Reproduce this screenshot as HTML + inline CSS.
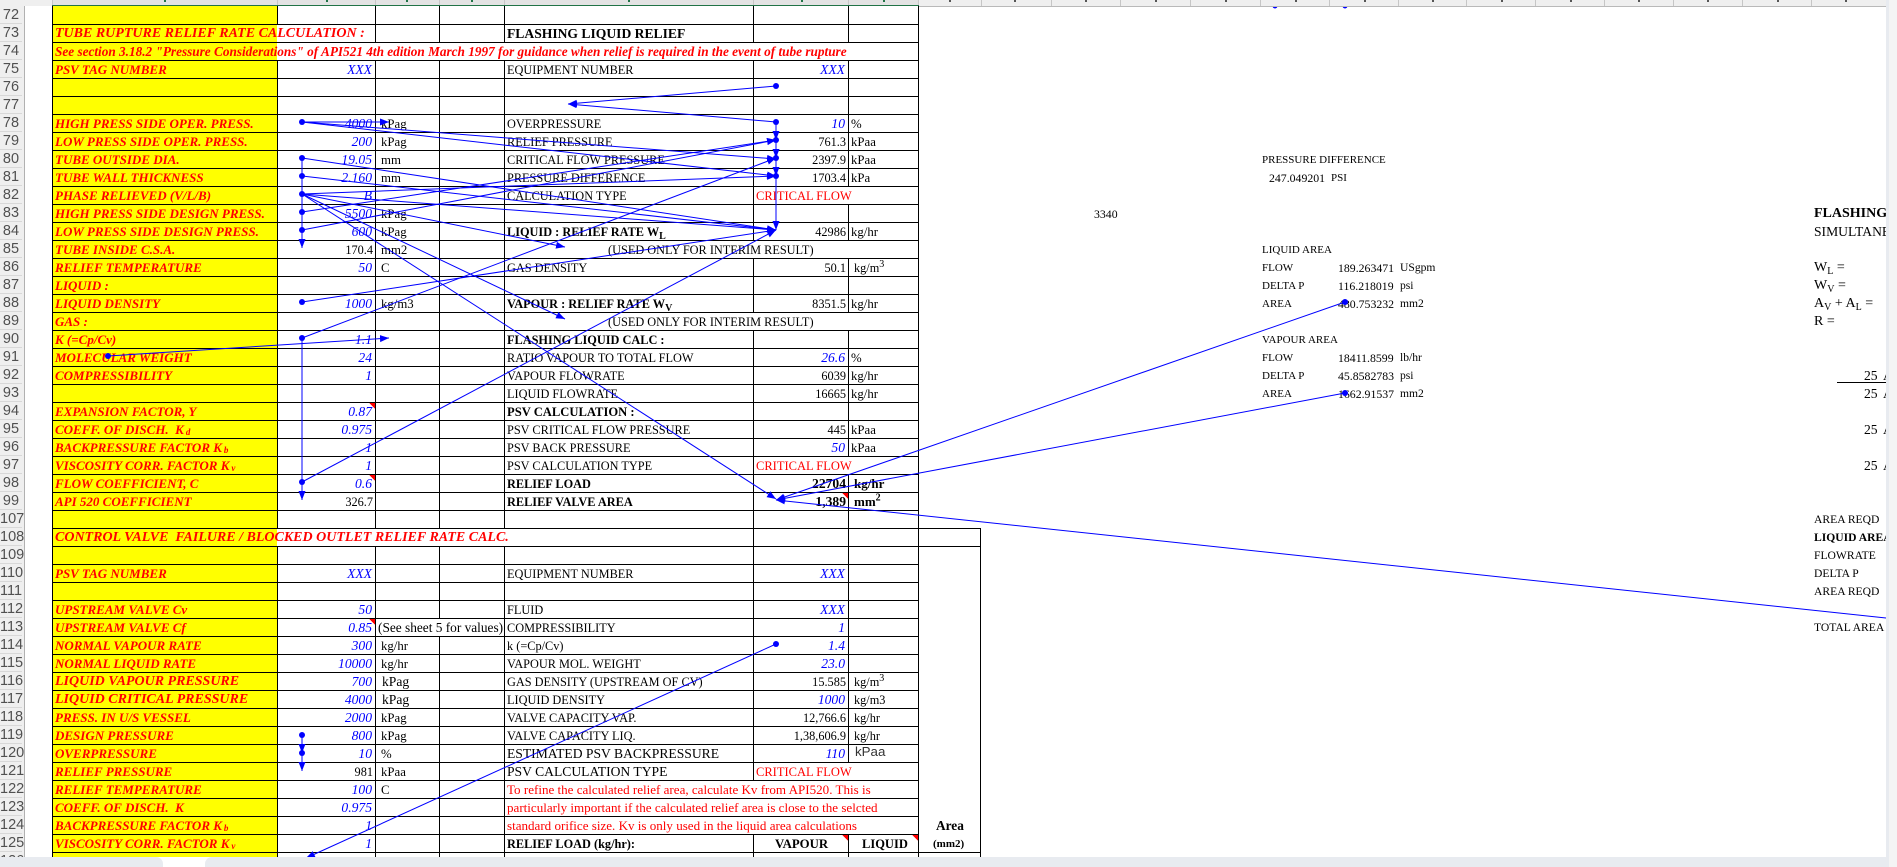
<!DOCTYPE html>
<html><head><meta charset="utf-8"><title>Sheet</title>
<style>
html,body{margin:0;padding:0;background:#fff}
#p{position:relative;width:1897px;height:867px;overflow:hidden;background:#fff;font-family:"Liberation Serif",serif;font-size:12.3px;color:#000}
#y{position:absolute;left:53px;top:6px;width:224px;height:851px;background:#ff0}
#g,#a{position:absolute;left:0;top:0}
.r{position:absolute;left:0;width:1897px;height:18px;line-height:18px}
.r span{position:absolute;top:1px;white-space:nowrap}
.r span sub,.r span sup{line-height:0;font-size:10px}
.r span sub{vertical-align:-3px}
.l{left:55px;color:#f00;font-weight:bold;font-style:italic;font-size:13px}
.l sub{font-size:9px!important;margin-left:2px;vertical-align:-1px!important}
.l.big{font-size:14px}
.v{right:1525px;color:#00f;font-style:italic;font-size:13.6px}
.n{right:1524px}
.u{left:381px;font-size:12.8px}
.m{left:507px}
.m.big{font-size:13.6px}
.m.b{font-size:12.3px}
.w{right:1052px;color:#00f;font-style:italic;font-size:13.6px}
.k{right:1051px}
.k.b{font-size:13.6px}
.x{left:851px;font-size:12.8px}
.c{left:756px;color:#f00;font-size:12.5px}
.b{font-weight:bold}
.t{left:608px}
.q{left:1262px;font-size:11px}.s{left:1338px;font-size:11.8px}.o{left:1400px;font-size:11.6px}
.f{left:1814px;font-size:11.6px}
.f.big{font-size:14px}
.e{left:507px;color:#f00;font-size:13.05px}
.tf{left:1864px;font-size:13.6px}
.ta{left:1883px;font-size:13.6px}
#rh{position:absolute;left:0;top:6px;width:25px;height:851px;background:#efefef;border-right:1px solid #b1b1b1;box-sizing:border-box;overflow:hidden;font-family:"Liberation Sans",sans-serif;font-size:14.5px;color:#505050}
#rh div{height:17px;line-height:18px;border-bottom:1px solid #d8d8d8;text-align:center;width:22px;margin-right:2px}
#ch{position:absolute;left:0;top:0;width:1886px;height:6px;background:#efefef;border-bottom:0}
#ch i{position:absolute;top:0;width:1px;height:6px;background:#c6c6c6}
#ch b{position:absolute;top:0;width:2px;height:2px;background:#555}
#sel{position:absolute;left:53px;top:0;width:865px;height:5px;background:#e3e3e3}
#gl{position:absolute;left:52px;top:5px;width:867px;height:1px;background:#217346}
#gy{position:absolute;left:919px;top:6px;width:967px;height:1px;background:#b9b9b9}
#rs{position:absolute;left:1886px;top:0;width:11px;height:867px;background:#f4f4f4;border-left:3px solid #e8ebf0;box-sizing:border-box}
.bb{position:absolute;top:857px;height:10px;background:#e8ebf0}
</style></head><body>
<div id="p">
<div id="y"></div>
<svg id="g" width="1897" height="867" shape-rendering="crispEdges">
<path fill="none" stroke="#000" stroke-width="1" d="
M52.5 6V857
M277.5 6V24M277.5 60V528M277.5 546V857
M375.5 6V42M375.5 60V528M375.5 546V857
M439.5 6V42M439.5 60V528M439.5 546V618M439.5 636V857
M504.5 6V42M504.5 60V528M504.5 546V857
M753.5 6V42M753.5 60V240M753.5 258V312M753.5 330V780M753.5 834V857
M848.5 6V42M848.5 60V186M848.5 204V240M848.5 258V312M848.5 330V456M848.5 474V762M848.5 834V857
M918.5 6V857
M980.5 528V857
M52 24.5H919M52 42.5H919M52 60.5H919M52 78.5H919M52 96.5H919M52 114.5H919M52 132.5H919M52 150.5H919M52 168.5H919M52 186.5H919M52 204.5H919M52 222.5H919M52 240.5H919M52 258.5H919M52 276.5H919M52 294.5H919M52 312.5H919M52 330.5H919M52 348.5H919M52 366.5H919M52 384.5H919M52 402.5H919M52 420.5H919M52 438.5H919M52 456.5H919M52 474.5H919M52 492.5H919M52 510.5H919
M52 528.5H981M52 546.5H981
M52 564.5H919M52 582.5H919M52 600.5H919M52 618.5H919M52 636.5H919M52 654.5H919M52 672.5H919M52 690.5H919M52 708.5H919M52 726.5H919M52 744.5H919M52 762.5H919M52 780.5H919M52 798.5H919M52 816.5H919M52 834.5H919
M52 852.5H981
M1837 382.5H1886"/>
<path fill="#f00" d="M369 403H375V409ZM369 475H375V481ZM842 493H848V499ZM369 619H375V625ZM842 835H848V841ZM912 835H918V841Z"/>
</svg>

<div class="r" style="top:24px"><span class="l big">TUBE RUPTURE RELIEF RATE CALCULATION :</span><span class="m b" style="font-size:13.6px">FLASHING LIQUID RELIEF</span></div>
<div class="r" style="top:42px"><span class="l" style="font-size:13.25px">See section 3.18.2 "Pressure Considerations" of API521 4th edition March 1997 for guidance when relief is required in the event of tube rupture</span></div>
<div class="r" style="top:60px"><span class="l">PSV TAG NUMBER</span><span class="v">XXX</span><span class="m">EQUIPMENT NUMBER</span><span class="w">XXX</span></div>
<div class="r" style="top:114px"><span class="l">HIGH PRESS SIDE OPER. PRESS.</span><span class="v">4000</span><span class="u">kPag</span><span class="m">OVERPRESSURE</span><span class="w">10</span><span class="x">%</span></div>
<div class="r" style="top:132px"><span class="l">LOW PRESS SIDE OPER. PRESS.</span><span class="v">200</span><span class="u">kPag</span><span class="m">RELIEF PRESSURE</span><span class="k">761.3</span><span class="x">kPaa</span></div>
<div class="r" style="top:150px"><span class="l">TUBE OUTSIDE DIA.</span><span class="v">19.05</span><span class="u">mm</span><span class="m">CRITICAL FLOW PRESSURE</span><span class="k">2397.9</span><span class="x">kPaa</span><span class="q">PRESSURE DIFFERENCE</span></div>
<div class="r" style="top:168px"><span class="l">TUBE WALL THICKNESS</span><span class="v">2.160</span><span class="u">mm</span><span class="m">PRESSURE DIFFERENCE</span><span class="k">1703.4</span><span class="x">kPa</span><span style="left:1269px;font-size:11.8px">247.049201</span><span style="left:1331px;font-size:11px">PSI</span></div>
<div class="r" style="top:186px"><span class="l">PHASE RELIEVED (V/L/B)</span><span class="v">B</span><span class="m">CALCULATION TYPE</span><span class="c">CRITICAL FLOW</span></div>
<div class="r" style="top:204px"><span class="l">HIGH PRESS SIDE DESIGN PRESS.</span><span class="v">5500</span><span class="u">kPag</span><span style="left:1094px;font-size:11.8px">3340</span><span class="f b big">FLASHING LIQUID</span></div>
<div class="r" style="top:222px"><span class="l">LOW PRESS SIDE DESIGN PRESS.</span><span class="v">600</span><span class="u">kPag</span><span class="m b">LIQUID : RELIEF RATE W<sub>L</sub></span><span class="k">42986</span><span class="x">kg/hr</span><span class="f big" style="font-size:13.6px">SIMULTANEOUS</span></div>
<div class="r" style="top:240px"><span class="l">TUBE INSIDE C.S.A.</span><span class="n">170.4</span><span class="u">mm2</span><span class="t">(USED ONLY FOR INTERIM RESULT)</span><span class="q">LIQUID AREA</span></div>
<div class="r" style="top:258px"><span class="l">RELIEF TEMPERATURE</span><span class="v">50</span><span class="u">C</span><span class="m">GAS DENSITY</span><span class="k">50.1</span><span style="left:854px">kg/m<sup>3</sup></span><span class="q">FLOW</span><span class="s">189.263471</span><span class="o">USgpm</span><span class="f big">W<sub>L</sub> =</span></div>
<div class="r" style="top:276px"><span class="l">LIQUID :</span><span class="q">DELTA P</span><span class="s">116.218019</span><span class="o">psi</span><span class="f big">W<sub>V</sub> =</span></div>
<div class="r" style="top:294px"><span class="l">LIQUID DENSITY</span><span class="v">1000</span><span class="u">kg/m3</span><span class="m b">VAPOUR : RELIEF RATE W<sub>V</sub></span><span class="k">8351.5</span><span class="x">kg/hr</span><span class="q">AREA</span><span class="s">480.753232</span><span class="o">mm2</span><span class="f big">A<sub>V</sub> + A<sub>L</sub> =</span></div>
<div class="r" style="top:312px"><span class="l">GAS :</span><span class="t">(USED ONLY FOR INTERIM RESULT)</span><span class="f big">R =</span></div>
<div class="r" style="top:330px"><span class="l">K (=Cp/Cv)</span><span class="v">1.1</span><span class="m b">FLASHING LIQUID CALC :</span><span class="q">VAPOUR AREA</span></div>
<div class="r" style="top:348px"><span class="l">MOLECULAR WEIGHT</span><span class="v">24</span><span class="m">RATIO VAPOUR TO TOTAL FLOW</span><span class="w">26.6</span><span class="x">%</span><span class="q">FLOW</span><span class="s">18411.8599</span><span class="o">lb/hr</span></div>
<div class="r" style="top:366px"><span class="l">COMPRESSIBILITY</span><span class="v">1</span><span class="m">VAPOUR FLOWRATE</span><span class="k">6039</span><span class="x">kg/hr</span><span class="q">DELTA P</span><span class="s">45.8582783</span><span class="o">psi</span><span class="tf">25</span><span class="ta">A</span></div>
<div class="r" style="top:384px"><span class="m">LIQUID FLOWRATE</span><span class="k">16665</span><span class="x">kg/hr</span><span class="q">AREA</span><span class="s">1662.91537</span><span class="o">mm2</span><span class="tf">25</span><span class="ta">A</span></div>
<div class="r" style="top:402px"><span class="l">EXPANSION FACTOR, Y</span><span class="v">0.87</span><span class="m b" style="font-size:12.6px">PSV CALCULATION :</span></div>
<div class="r" style="top:420px"><span class="l">COEFF. OF DISCH.&nbsp; K<sub>d</sub></span><span class="v">0.975</span><span class="m">PSV CRITICAL FLOW PRESSURE</span><span class="k">445</span><span class="x">kPaa</span><span class="tf">25</span><span class="ta">A</span></div>
<div class="r" style="top:438px"><span class="l">BACKPRESSURE FACTOR K<sub>b</sub></span><span class="v">1</span><span class="m">PSV BACK PRESSURE</span><span class="w">50</span><span class="x">kPaa</span></div>
<div class="r" style="top:456px"><span class="l">VISCOSITY CORR. FACTOR K<sub>v</sub></span><span class="v">1</span><span class="m">PSV CALCULATION TYPE</span><span class="c">CRITICAL FLOW</span><span class="tf">25</span><span class="ta">A</span></div>
<div class="r" style="top:474px"><span class="l">FLOW COEFFICIENT, C</span><span class="v">0.6</span><span class="m b">RELIEF LOAD</span><span class="k b">22704</span><span class="b" style="left:854px;font-size:13px">kg/hr</span></div>
<div class="r" style="top:492px"><span class="l">API 520 COEFFICIENT</span><span class="n">326.7</span><span class="m b">RELIEF VALVE AREA</span><span class="k b">1,389</span><span class="b" style="left:854px;font-size:13px">mm<sup>2</sup></span></div>
<div class="r" style="top:510px"><span class="f">AREA REQD</span></div>
<div class="r" style="top:528px"><span class="l big">CONTROL VALVE&nbsp; FAILURE / BLOCKED OUTLET RELIEF RATE CALC.</span><span class="f b">LIQUID AREA</span></div>
<div class="r" style="top:546px"><span class="f">FLOWRATE</span></div>
<div class="r" style="top:564px"><span class="l">PSV TAG NUMBER</span><span class="v">XXX</span><span class="m">EQUIPMENT NUMBER</span><span class="w">XXX</span><span class="f">DELTA P</span></div>
<div class="r" style="top:582px"><span class="f">AREA REQD</span></div>
<div class="r" style="top:600px"><span class="l">UPSTREAM VALVE Cv</span><span class="v">50</span><span class="m">FLUID</span><span class="w">XXX</span></div>
<div class="r" style="top:618px"><span class="l">UPSTREAM VALVE Cf</span><span class="v">0.85</span><span style="left:378px;font-size:13.33px">(See sheet 5 for values)</span><span class="m">COMPRESSIBILITY</span><span class="w">1</span><span class="f">TOTAL AREA</span></div>
<div class="r" style="top:636px"><span class="l">NORMAL VAPOUR RATE</span><span class="v">300</span><span class="u">kg/hr</span><span class="m">k (=Cp/Cv)</span><span class="w">1.4</span></div>
<div class="r" style="top:654px"><span class="l">NORMAL LIQUID RATE</span><span class="v">10000</span><span class="u">kg/hr</span><span class="m">VAPOUR MOL. WEIGHT</span><span class="w">23.0</span></div>
<div class="r" style="top:672px"><span class="l big">LIQUID VAPOUR PRESSURE</span><span class="v">700</span><span style="left:382px;font-size:13.6px">kPag</span><span class="m">GAS DENSITY (UPSTREAM OF CV)</span><span class="k">15.585</span><span style="left:854px">kg/m<sup>3</sup></span></div>
<div class="r" style="top:690px"><span class="l big">LIQUID CRITICAL PRESSURE</span><span class="v">4000</span><span style="left:382px;font-size:13.6px">kPag</span><span class="m">LIQUID DENSITY</span><span class="w">1000</span><span style="left:854px">kg/m3</span></div>
<div class="r" style="top:708px"><span class="l">PRESS. IN U/S VESSEL</span><span class="v">2000</span><span class="u">kPag</span><span class="m">VALVE CAPACITY VAP.</span><span class="k">12,766.6</span><span style="left:854px">kg/hr</span></div>
<div class="r" style="top:726px"><span class="l">DESIGN PRESSURE</span><span class="v">800</span><span class="u">kPag</span><span class="m">VALVE CAPACITY LIQ.</span><span class="k">1,38,606.9</span><span style="left:854px">kg/hr</span></div>
<div class="r" style="top:744px"><span class="l">OVERPRESSURE</span><span class="v">10</span><span class="u">%</span><span class="m big">ESTIMATED PSV BACKPRESSURE</span><span class="w">110</span><span style="left:855px;top:-1px;font-family:'Liberation Sans',sans-serif;font-size:13.33px;color:#333">kPaa</span></div>
<div class="r" style="top:762px"><span class="l">RELIEF PRESSURE</span><span class="n">981</span><span class="u">kPaa</span><span class="m big">PSV CALCULATION TYPE</span><span class="c">CRITICAL FLOW</span></div>
<div class="r" style="top:780px"><span class="l">RELIEF TEMPERATURE</span><span class="v">100</span><span class="u">C</span><span class="e">To refine the calculated relief area, calculate Kv from API520. This is</span></div>
<div class="r" style="top:798px"><span class="l">COEFF. OF DISCH.&nbsp; K</span><span class="v">0.975</span><span class="e">particularly important if the calculated relief area is close to the selcted</span></div>
<div class="r" style="top:816px"><span class="l">BACKPRESSURE FACTOR K<sub>b</sub></span><span class="v">1</span><span class="e">standard orifice size. Kv is only used in the liquid area calculations</span><span class="b" style="left:936px;font-size:13.33px">Area</span></div>
<div class="r" style="top:834px"><span class="l">VISCOSITY CORR. FACTOR K<sub>v</sub></span><span class="v">1</span><span class="m b">RELIEF LOAD (kg/hr):</span><span class="b" style="left:775px;font-size:12.8px">VAPOUR</span><span class="b" style="left:862px;font-size:12.5px">LIQUID</span><span class="b" style="left:933px;font-size:11px">(mm2)</span></div>

<svg id="a" width="1897" height="867" fill="none" stroke="#0000ff" stroke-width="1">
<defs><marker id="h" markerUnits="userSpaceOnUse" markerWidth="10" markerHeight="8" refX="9" refY="3.5" orient="auto"><path d="M0 0L9 3.5L0 7Z" fill="#0000ff" stroke="none"/></marker></defs>
<g marker-end="url(#h)">
<path d="M776 86L568 104"/><path d="M776 122L568 104"/>
<path d="M776 122V140"/><path d="M776 140V158"/><path d="M776 158V176"/><path d="M776 176V230"/>
<path d="M302 122H389"/><path d="M302 122L776 159"/><path d="M302 122L776 176"/>
<path d="M302 158L776 230"/><path d="M302 176L776 230"/><path d="M302 194L776 230"/>
<path d="M302 302L776 230"/><path d="M302 482L776 230"/>
<path d="M302 212L776 140"/><path d="M302 230L776 140"/><path d="M302 194L776 176"/><path d="M302 338L776 158"/>
<path d="M302 194L565 247"/><path d="M302 194L565 319"/><path d="M302 194L776 499"/>
<path d="M302 158V248"/><path d="M302 338V500"/>
<path d="M108 356L389 338"/>
<path d="M1345 302L776 500"/><path d="M1345 393L776 500"/><path d="M1886 618L776 500"/>
<path d="M776 644L306 858"/>
<path d="M302 735V753"/><path d="M302 753V771"/>
</g>
<g fill="#0000ff" stroke="none">
<circle cx="776" cy="86" r="3"/><circle cx="776" cy="122" r="3"/><circle cx="776" cy="140" r="3"/><circle cx="776" cy="158" r="3"/><circle cx="776" cy="176" r="3"/>
<circle cx="302" cy="122" r="3"/><circle cx="302" cy="158" r="3"/><circle cx="302" cy="176" r="3"/><circle cx="302" cy="194" r="3"/><circle cx="302" cy="212" r="3"/><circle cx="302" cy="230" r="3"/>
<circle cx="302" cy="302" r="3"/><circle cx="302" cy="338" r="3"/><circle cx="302" cy="482" r="3"/><circle cx="108" cy="356" r="3"/>
<circle cx="1345" cy="302" r="3"/><circle cx="1345" cy="393" r="3"/><circle cx="776" cy="644" r="3"/>
<circle cx="302" cy="735" r="3"/><circle cx="302" cy="753" r="3"/>
<circle cx="1275" cy="6" r="2.5"/><circle cx="1345" cy="6" r="2.5"/>
</g>
</svg>

<div id="ch">
<div id="sel"></div>
<i style="left:52px"></i><i style="left:277px"></i><i style="left:375px"></i><i style="left:439px"></i><i style="left:504px"></i><i style="left:753px"></i><i style="left:848px"></i><i style="left:918px"></i><i style="left:981px"></i><i style="left:1051px"></i><i style="left:1120px"></i><i style="left:1190px"></i><i style="left:1260px"></i><i style="left:1329px"></i><i style="left:1398px"></i><i style="left:1466px"></i><i style="left:1535px"></i><i style="left:1604px"></i><i style="left:1673px"></i><i style="left:1742px"></i><i style="left:1811px"></i>
<b style="left:164px;background:#217346"></b><b style="left:326px;background:#217346"></b><b style="left:406px;background:#217346"></b><b style="left:471px;background:#217346"></b><b style="left:628px;background:#217346"></b><b style="left:801px;background:#217346"></b><b style="left:883px;background:#217346"></b>
<b style="left:949px"></b><b style="left:1014px"></b><b style="left:1085px"></b><b style="left:1155px"></b><b style="left:1225px"></b><b style="left:1295px"></b><b style="left:1364px"></b><b style="left:1432px"></b><b style="left:1501px"></b><b style="left:1570px"></b><b style="left:1638px"></b><b style="left:1707px"></b><b style="left:1777px"></b><b style="left:1845px"></b>
</div>
<div id="gl"></div><div id="gy"></div>

<div id="rh"><div>72</div><div>73</div><div>74</div><div>75</div><div>76</div><div>77</div><div>78</div><div>79</div><div>80</div><div>81</div><div>82</div><div>83</div><div>84</div><div>85</div><div>86</div><div>87</div><div>88</div><div>89</div><div>90</div><div>91</div><div>92</div><div>93</div><div>94</div><div>95</div><div>96</div><div>97</div><div>98</div><div>99</div><div>107</div><div>108</div><div>109</div><div>110</div><div>111</div><div>112</div><div>113</div><div>114</div><div>115</div><div>116</div><div>117</div><div>118</div><div>119</div><div>120</div><div>121</div><div>122</div><div>123</div><div>124</div><div>125</div><div>126</div></div>

<div id="rs"></div>
<div class="bb" style="left:0;width:163px;border-top-right-radius:7px"></div>
<div class="bb" style="left:205px;width:1684px;border-top-left-radius:7px"></div>
</div>
</body></html>
